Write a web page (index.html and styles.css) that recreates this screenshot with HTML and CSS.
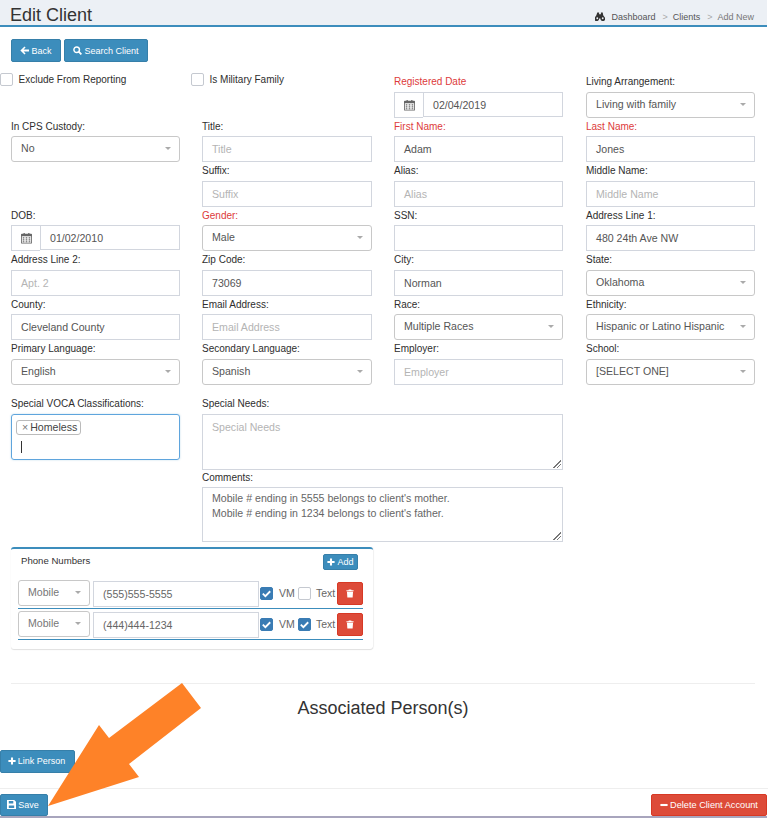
FILE: index.html
```html
<!DOCTYPE html>
<html lang="en">
<head>
<meta charset="utf-8">
<title>Edit Client</title>
<link rel="stylesheet" href="styles.css">
</head>
<body>
<svg width="0" height="0" class="defs">
  <symbol id="cal" viewBox="0 0 13 14"><path fill="currentColor" d="M1 2h2V1h1.500v1h4V1H10v1h2a1 1 0 0 1 1 1v9.500a1 1 0 0 1-1 1H1a1 1 0 0 1-1-1V3a1 1 0 0 1 1-1zm0 3v7.500h11V5zm1 1h2v1.500H2zm3.500 0h2v1.500h-2zM9 6h2v1.500H9zM2 8.500h2V10H2zm3.500 0h2V10h-2zm3.500 0h2V10H9zM2 10.800h2v1.200H2zm3.500 0h2v1.200h-2zm3.500 0h2v1.200H9z"/></symbol>
  <symbol id="plus" viewBox="0 0 10 10"><path fill="currentColor" d="M3.700 0.500h2.600v3.200h3.200v2.600H6.300v3.200H3.700V6.300H0.500V3.700h3.200z"/></symbol>
  <symbol id="check" viewBox="0 0 14 14"><path fill="none" stroke="#fff" stroke-width="2" d="M3 7.200l2.800 2.600L11 4.600"/></symbol>
  <symbol id="trash" viewBox="0 0 10 11"><path fill="currentColor" d="M3.500 0.500h3l.5 1h2.500v1.200H.5V1.500H3zM1.200 3.300h7.600l-.5 7.200H1.700z"/></symbol>
</svg>
<div class="page">
  <header class="topbar">
    <h1 class="title">Edit Client</h1>
    <nav class="crumbs">
      <svg class="crumb-ico" viewBox="0 0 11 9" width="10" height="9"><path fill="currentColor" d="M2.500 0h2v2h2V0h2l.5 3 2 3a2.600 2.600 0 1 1-5 .8H4.500a2.600 2.600 0 1 1-5-.8l2-3z"/><circle cx="2.500" cy="6.400" r="1" fill="#ecf0f5"/><circle cx="8.500" cy="6.400" r="1" fill="#ecf0f5"/></svg>
      <span class="crumb">Dashboard</span><span class="sep">&gt;</span><span class="crumb">Clients</span><span class="sep">&gt;</span><span class="crumb muted">Add New</span>
    </nav>
  </header>

  <div class="toolbar">
    <button class="btn blue back" type="button"><svg viewBox="0 0 10 10" width="9" height="9"><path fill="currentColor" d="M5 .6l1.200 1.200L4 3.800h6v2.400H4l2.200 2L5 9.400.4 5z"/></svg>Back</button>
    <button class="btn blue search" type="button"><svg viewBox="0 0 11 11" width="9" height="9"><circle cx="4.500" cy="4.500" r="3.400" fill="none" stroke="currentColor" stroke-width="1.800"/><path stroke="currentColor" stroke-width="2.200" d="M7 7l3.300 3.300"/></svg>Search Client</button>
  </div>

  <div class="form-grid">
    <div class="field"><label class="check-label"><span class="box"></span>Exclude From Reporting</label></div>
    <div class="field"><label class="check-label"><span class="box"></span>Is Military Family</label></div>
    <div class="field"><div class="lab req">Registered Date</div><div class="group"><span class="addon"><svg width="11" height="12"><use href="#cal"/></svg></span><div class="ctl">02/04/2019</div></div></div>
    <div class="field"><div class="lab">Living Arrangement:</div><div class="sel">Living with family</div></div>

    <div class="field"><div class="lab">In CPS Custody:</div><div class="sel">No</div></div>
    <div class="field"><div class="lab">Title:</div><div class="ctl ph">Title</div></div>
    <div class="field"><div class="lab req">First Name:</div><div class="ctl">Adam</div></div>
    <div class="field"><div class="lab req">Last Name:</div><div class="ctl">Jones</div></div>

    <div class="field"></div>
    <div class="field"><div class="lab">Suffix:</div><div class="ctl ph">Suffix</div></div>
    <div class="field"><div class="lab">Alias:</div><div class="ctl ph">Alias</div></div>
    <div class="field"><div class="lab">Middle Name:</div><div class="ctl ph">Middle Name</div></div>

    <div class="field"><div class="lab">DOB:</div><div class="group"><span class="addon"><svg width="11" height="12"><use href="#cal"/></svg></span><div class="ctl">01/02/2010</div></div></div>
    <div class="field"><div class="lab req">Gender:</div><div class="sel">Male</div></div>
    <div class="field"><div class="lab">SSN:</div><div class="ctl"></div></div>
    <div class="field"><div class="lab">Address Line 1:</div><div class="ctl">480 24th Ave NW</div></div>

    <div class="field"><div class="lab">Address Line 2:</div><div class="ctl ph">Apt. 2</div></div>
    <div class="field"><div class="lab">Zip Code:</div><div class="ctl">73069</div></div>
    <div class="field"><div class="lab">City:</div><div class="ctl">Norman</div></div>
    <div class="field"><div class="lab">State:</div><div class="sel">Oklahoma</div></div>

    <div class="field"><div class="lab">County:</div><div class="ctl">Cleveland County</div></div>
    <div class="field"><div class="lab">Email Address:</div><div class="ctl ph">Email Address</div></div>
    <div class="field"><div class="lab">Race:</div><div class="sel">Multiple Races</div></div>
    <div class="field"><div class="lab">Ethnicity:</div><div class="sel">Hispanic or Latino Hispanic</div></div>

    <div class="field"><div class="lab">Primary Language:</div><div class="sel">English</div></div>
    <div class="field"><div class="lab">Secondary Language:</div><div class="sel">Spanish</div></div>
    <div class="field"><div class="lab">Employer:</div><div class="ctl ph">Employer</div></div>
    <div class="field"><div class="lab">School:</div><div class="sel">[SELECT ONE]</div></div>
  </div>

  <div class="lower">
    <div>
      <div class="lab">Special VOCA Classifications:</div>
      <div class="multi">
        <span class="tag"><span class="tag-x">×</span>Homeless</span>
        <span class="caret-line"></span>
      </div>
    </div>
    <div class="wide">
      <div class="lab">Special Needs:</div>
      <div class="area needs ph">Special Needs</div>
      <div class="lab comments-lab">Comments:</div>
      <div class="area comments">Mobile # ending in 5555 belongs to client's mother.<br>Mobile # ending in 1234 belongs to client's father.</div>
    </div>
  </div>

  <section class="panel">
    <div class="panel-head">
      <span class="panel-title">Phone Numbers</span>
      <button class="btn blue add" type="button"><svg width="8" height="8"><use href="#plus"/></svg>Add</button>
    </div>
    <div class="phone-row">
      <div class="sel small">Mobile</div>
      <div class="ctl phone">(555)555-5555</div>
      <span class="box on"><svg width="13" height="13"><use href="#check"/></svg></span><span class="opt">VM</span>
      <span class="box"></span><span class="opt text">Text</span>
      <button class="btn red del" type="button" aria-label="Delete"><svg width="8" height="9"><use href="#trash"/></svg></button>
    </div>
    <div class="phone-row">
      <div class="sel small">Mobile</div>
      <div class="ctl phone">(444)444-1234</div>
      <span class="box on"><svg width="13" height="13"><use href="#check"/></svg></span><span class="opt">VM</span>
      <span class="box on"><svg width="13" height="13"><use href="#check"/></svg></span><span class="opt text">Text</span>
      <button class="btn red del" type="button" aria-label="Delete"><svg width="8" height="9"><use href="#trash"/></svg></button>
    </div>
  </section>

  <hr class="rule">
  <h2 class="assoc">Associated Person(s)</h2>
  <button class="btn blue link" type="button"><svg width="8" height="8"><use href="#plus"/></svg>Link Person</button>

  <footer class="footer">
    <button class="btn blue save" type="button"><svg viewBox="0 0 10 10" width="9" height="9"><path fill="currentColor" d="M0 0h8l2 2v8H0zm2 1v3h5V1zm0 5v3h6V6z"/></svg>Save</button>
    <button class="btn red danger" type="button"><svg viewBox="0 0 10 10" width="8" height="8"><path fill="currentColor" d="M.5 3.700h9v2.600h-9z"/></svg>Delete Client Account</button>
  </footer>
  <div class="strip"></div>

  <svg class="arrow" viewBox="0 0 768 818" width="768" height="818"><polygon fill="#fe8228" points="182,683 201,708 129,764 139,777 48,806 99,725 109,738"/></svg>
</div>
</body>
</html>
```
FILE: styles.css
```css
* { box-sizing: border-box; }
html, body { margin: 0; padding: 0; background: #fff; }
body { font-family: "Liberation Sans", Arial, sans-serif; font-size: 10px; color: #2e2e2e; overflow: hidden; }
.defs { position: absolute; }
.page { position: relative; width: 768px; height: 818px; overflow: hidden; }

.topbar { width: 767px; height: 27px; background: #ecf0f5; border-bottom: 2px solid #3c8dbc; display: flex; justify-content: space-between; align-items: flex-end; padding: 0 13px 0 10px; }
.title { margin: 0 0 -3px; font-size: 18px; font-weight: 400; line-height: 25px; color: #333; }
.crumbs { display: flex; align-items: center; font-size: 9px; height: 13px; margin-bottom: 2px; color: #555; }
.crumb-ico { margin-right: 6px; color: #333; }
.sep { color: #aaa; margin: 0 5px 0 7px; }
.muted { color: #777; }

.btn { border: 1px solid #367fa9; border-radius: 2px; color: #fff; font: inherit; font-size: 9px; display: inline-flex; align-items: center; justify-content: center; gap: 2px; padding: 0; }
.blue { background: #3c8dbc; }
.red { background: #dd4b39; border-color: #d73925; }
.toolbar { display: flex; gap: 3px; margin: 12px 0 0 11px; height: 23px; }
.back { width: 50px; }
.search { width: 84px; }

.form-grid { display: grid; grid-template-columns: 169px 170px 169px 170px; grid-auto-rows: 44.500px; column-gap: 22px; margin: 11px 0 0 11px; }
.form-grid .field:nth-child(4n) { width: 169px; justify-self: end; }
.lab { height: 18.600px; line-height: 18.600px; white-space: nowrap; }
.req { color: #dd3b3b; }
.check-label { display: flex; align-items: center; gap: 6px; margin-left: -11.500px; height: 13px; white-space: nowrap; }
.box { flex: none; width: 13px; height: 13px; border: 1px solid #c5c9d0; border-radius: 2px; background: #fff; display: inline-block; }
.box.on { background: #3a7cb4; border-color: #3a7cb4; }
.box svg { display: block; margin: -1px; }

.ctl, .sel { height: 26px; border: 1px solid #d2d6de; font-size: 10.600px; line-height: 24px; padding: 0 9px; color: #555; white-space: nowrap; background: #fff; }
.ph { color: #b4b4b4; }
.sel { border-radius: 3px; border-color: #c8c8c8; position: relative; line-height: 23px; }
.sel::after { content: ""; position: absolute; right: 8px; top: 10px; border: 3px solid transparent; border-top-color: #aaa; border-bottom: 0; }
.group { display: flex; }
.addon { width: 29px; height: 26px; flex: none; border: 1px solid #d2d6de; border-right: 0; display: flex; align-items: center; justify-content: center; color: #666; }
.addon svg { display: block; }
.group .ctl { flex: 1; min-width: 0; height: 25px; }

.lower { display: grid; grid-template-columns: 169px 361px; column-gap: 22px; margin: 10.900px 0 0 11px; }
.multi { height: 46px; border: 1px solid #5fa5dd; border-radius: 3px; padding: 5px 4px; box-shadow: 0 0 2px rgba(60,141,188,.35); }
.tag { display: block; width: 65px; height: 15px; border: 1px solid #bbb; border-radius: 3px; line-height: 13px; color: #444; padding-left: 5px; white-space: nowrap; font-size: 10.600px; }
.tag-x { color: #777; margin-right: 2px; }
.caret-line { display: block; width: 1px; height: 12px; background: #333; margin: 6px 0 0 5px; }
.area { border: 1px solid #d2d6de; padding: 5px 9px; font-size: 10.600px; line-height: 15px; color: #666; position: relative; }
.area::after { content: ""; position: absolute; right: 1px; bottom: 1px; width: 8px; height: 8px; background: linear-gradient(135deg, transparent 50%, #777 50%, #777 58%, transparent 58%, transparent 72%, #777 72%, #777 80%, transparent 80%); }
.needs { height: 56px; color: #b4b4b4; }
.comments-lab { margin-top: -1px; height: 18px; }
.comments { height: 55px; padding-top: 3px; }

.panel { width: 362px; height: 102px; margin: 5px 0 0 11px; border-top: 2px solid #3c8dbc; border-radius: 3px; box-shadow: 0 1px 1px rgba(0,0,0,.12), 1px 0 1px rgba(0,0,0,.05); padding: 0 9px 0 7px; }
.panel-head { display: flex; justify-content: space-between; align-items: center; height: 31px; padding: 0 6px 7px 3px; }
.panel-title { font-size: 9.600px; color: #333; }
.add { width: 35px; height: 16px; margin-top: 3px; }
.phone-row { display: flex; align-items: flex-start; width: 345px; height: 29px; border-bottom: 1px solid #3c8dbc; margin-bottom: 2px; }
.sel.small { width: 72px; height: 26px; flex: none; color: #777; }
.ctl.phone { width: 166px; height: 26px; flex: none; margin: 1px 0 0 3px; color: #666; }
.phone-row .box { margin: 7px 0 0 1px; }
.opt { margin: 6px 0 0 6px; width: 14px; color: #666; font-size: 10.500px; line-height: 14px; }
.phone-row .opt + .box { margin-left: 5px; }
.opt.text { width: 21px; margin-left: 5px; }
.del { width: 26px; height: 23px; flex: none; margin-top: 2px; }

.rule { border: 0; border-top: 1px solid #eee; margin: 34px 13px 0 11px; }
.assoc { margin: 14px 0 0; text-align: center; font-size: 18px; font-weight: 400; line-height: 20px; color: #333; width: 766px; }
.link { display: flex; width: 75px; height: 23px; margin-top: 32px; padding-right: 2px; }

.footer { display: flex; justify-content: space-between; align-items: flex-start; height: 28px; margin-top: 15px; border-top: 1px solid #eee; padding: 5px 1px 0 0; }
.save { width: 48px; height: 22px; padding-right: 2px; }
.danger { width: 116px; height: 22px; font-size: 9.200px; }
.strip { height: 2px; background: #a8a5bd; width: 767px; }
.arrow { position: absolute; left: 0; top: 0; pointer-events: none; }
```
